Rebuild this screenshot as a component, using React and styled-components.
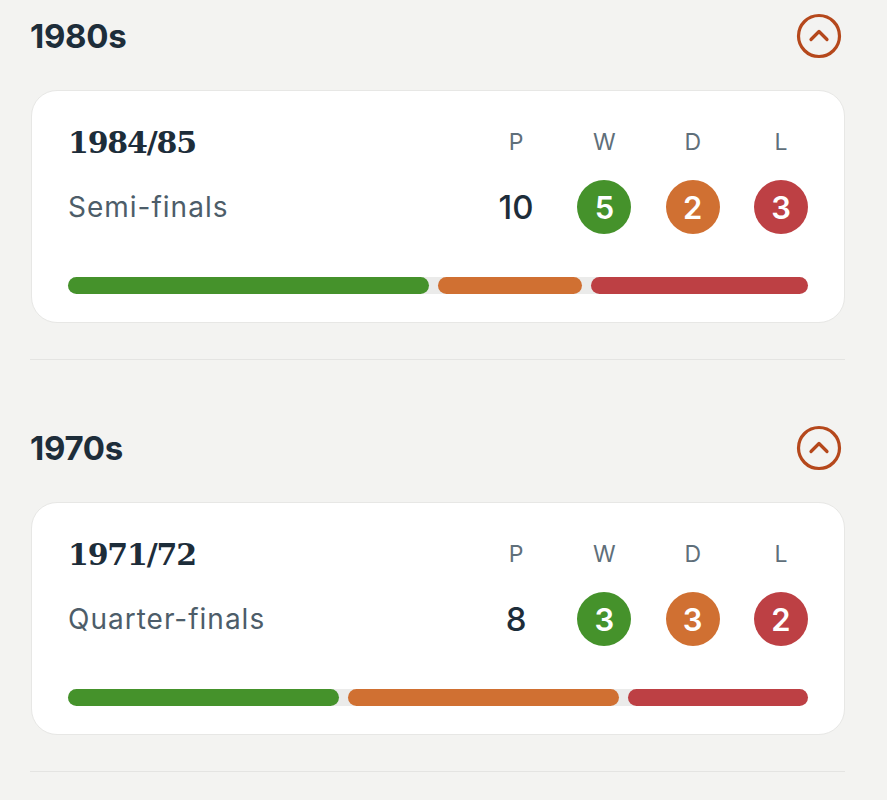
import React from 'react'
import styled, { createGlobalStyle } from 'styled-components'

const COLORS = {
  PAGE: '#f3f3f1',
  INK: '#1d2d3a',
  MUTED: '#4d5d69',
  LABEL: '#5f6f7a',
  LINE: '#e4e4e2',
  ACCENT: '#b5481c',
  WIN: '#45922b',
  DRAW: '#d07032',
  LOSS: '#bd4044',
  TRACK: '#ebebea',
}

const GlobalStyle = createGlobalStyle`
  body {
    margin: 0;
    background: ${COLORS.PAGE};
    font-family: Inter, "Open Sans", sans-serif;
    color: ${COLORS.INK};
  }
`

const Page = styled.div`
  padding: 0 42px 0 30px;
`

const Section = styled.section`
  padding: 66px 0 36px;
  border-bottom: 1px solid ${COLORS.LINE};
  &:first-child {
    padding-top: 14px;
  }
`

const Header = styled.div`
  display: flex;
  align-items: center;
  justify-content: space-between;
  height: 44px;
  margin-bottom: 32px;
`

const Decade = styled.h2`
  margin: 0;
  font-size: 33px;
  font-weight: 700;
  letter-spacing: -0.3px;
  color: ${COLORS.INK};
`

const CollapseButton = styled.button`
  display: flex;
  align-items: center;
  justify-content: center;
  width: 46px;
  height: 46px;
  margin-right: 3px;
  padding: 0;
  border: none;
  background: none;
  cursor: pointer;
`

const Card = styled.div`
  margin-left: 1px;
  padding: 31px 36px 28px;
  background: #fff;
  border: 1px solid #e7e7e5;
  border-radius: 26px;
`

const Grid = styled.div`
  display: grid;
  grid-template-columns: 1fr repeat(4, 54px);
  grid-template-rows: 40px 54px;
  column-gap: 34.3px;
  row-gap: 18px;
  align-items: center;
`

const Season = styled.div`
  font-family: "DejaVu Serif", "Liberation Serif", serif;
  font-size: 30px;
  font-weight: 700;
  letter-spacing: -1.2px;
  color: ${COLORS.INK};
`

const Round = styled.div`
  font-size: 28px;
  font-weight: 400;
  letter-spacing: 1px;
  color: ${COLORS.MUTED};
`

const StatLabel = styled.div`
  text-align: center;
  font-size: 23px;
  font-weight: 400;
  color: ${COLORS.LABEL};
`

const Played = styled.div`
  text-align: center;
  font-size: 33px;
  font-weight: 500;
  color: ${COLORS.INK};
`

const Badge = styled.div`
  display: flex;
  align-items: center;
  justify-content: center;
  width: 54px;
  height: 54px;
  border-radius: 50%;
  background: ${p => p.$color};
  color: #fff;
  font-size: 31px;
  font-weight: 600;
`

const Bar = styled.div`
  display: flex;
  gap: 9px;
  height: 17px;
  margin-top: 43px;
  background: ${COLORS.TRACK};
  border-radius: 9px;
`

const Segment = styled.div`
  flex: ${p => p.$grow} 1 0;
  background: ${p => p.$color};
  border-radius: 9px;
`

const ChevronCircle = () => (
  <svg width='46' height='46' viewBox='0 0 46 46' fill='none'>
    <circle cx='23' cy='23' r='20.5' stroke={COLORS.ACCENT} strokeWidth='3.2' />
    <polyline
      points='15,26.5 23,18.5 31,26.5'
      stroke={COLORS.ACCENT}
      strokeWidth='3.2'
      strokeLinecap='round'
      strokeLinejoin='round'
    />
  </svg>
)

const decades = [
  {
    label: '1980s',
    season: '1984/85',
    round: 'Semi-finals',
    p: 10,
    w: 5,
    d: 2,
    l: 3,
  },
  {
    label: '1970s',
    season: '1971/72',
    round: 'Quarter-finals',
    p: 8,
    w: 3,
    d: 3,
    l: 2,
  },
]

const SeasonCard = ({ season, round, p, w, d, l }) => (
  <Card>
    <Grid>
      <Season>{season}</Season>
      <StatLabel>P</StatLabel>
      <StatLabel>W</StatLabel>
      <StatLabel>D</StatLabel>
      <StatLabel>L</StatLabel>
      <Round>{round}</Round>
      <Played>{p}</Played>
      <Badge $color={COLORS.WIN}>{w}</Badge>
      <Badge $color={COLORS.DRAW}>{d}</Badge>
      <Badge $color={COLORS.LOSS}>{l}</Badge>
    </Grid>
    <Bar>
      <Segment $grow={w} $color={COLORS.WIN} />
      <Segment $grow={d} $color={COLORS.DRAW} />
      <Segment $grow={l} $color={COLORS.LOSS} />
    </Bar>
  </Card>
)

export default function App() {
  return (
    <>
      <GlobalStyle />
      <Page>
        {decades.map(item => (
          <Section key={item.label}>
            <Header>
              <Decade>{item.label}</Decade>
              <CollapseButton aria-label='Collapse'>
                <ChevronCircle />
              </CollapseButton>
            </Header>
            <SeasonCard {...item} />
          </Section>
        ))}
      </Page>
    </>
  )
}
